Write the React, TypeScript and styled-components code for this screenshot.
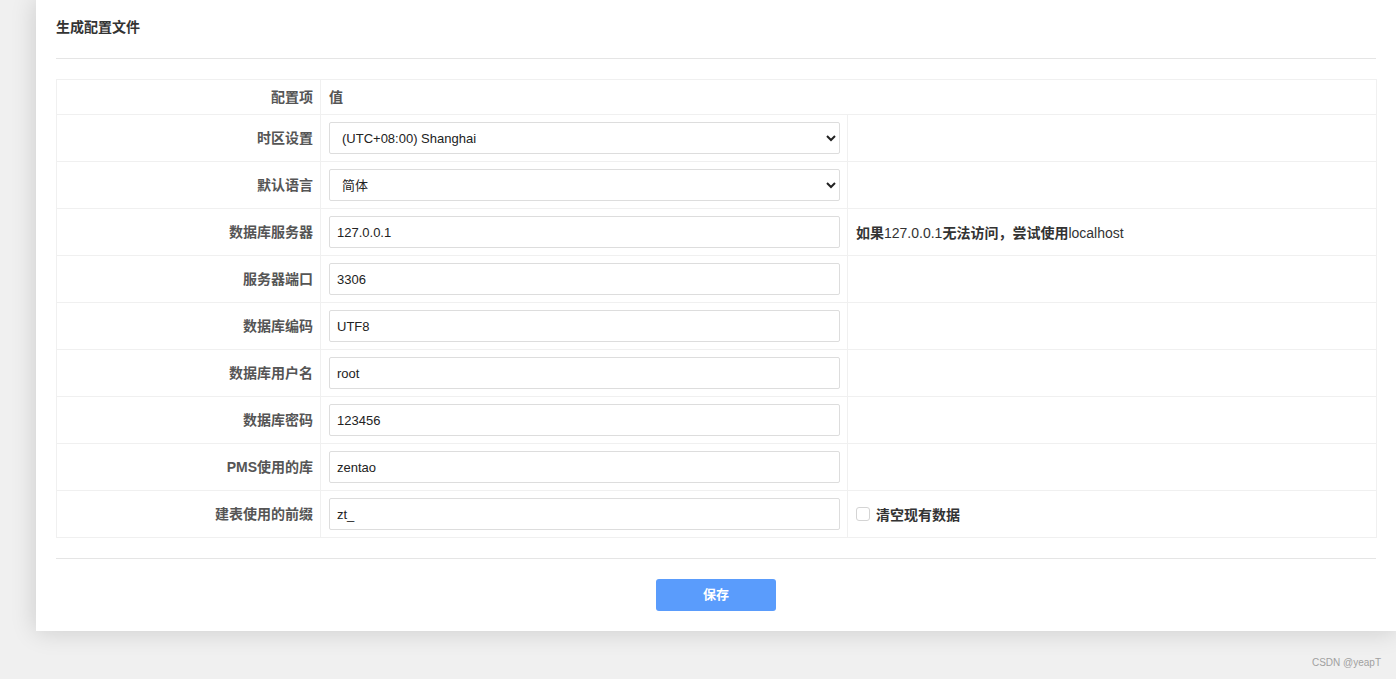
import { FC } from 'react';
import styled, { createGlobalStyle } from 'styled-components';

const GlobalStyle = createGlobalStyle`
  html, body {
    margin: 0;
    padding: 0;
    background: #f0f0f0;
    font-family: 'Liberation Sans', 'Noto Sans CJK SC', sans-serif;
    font-size: 13px;
    color: #333;
  }
`;

const Page = styled.div`
  width: 1396px;
  height: 679px;
  overflow: hidden;
`;

const Panel = styled.div`
  margin-left: 36px;
  width: 1360px;
  height: 631px;
  box-sizing: border-box;
  padding: 0 20px;
  background: #fff;
  box-shadow: 0 0 24px rgba(0, 0, 0, 0.16);
`;

const PanelHead = styled.div`
  height: 59px;
  box-sizing: border-box;
  padding-top: 17px;
  border-bottom: 1px solid #e5e5e5;
`;

const Title = styled.div`
  font-size: 14px;
  line-height: 20px;
  font-weight: bold;
  color: #333;
`;

const Table = styled.table`
  margin-top: 20px;
  width: 1320px;
  border-collapse: collapse;
  table-layout: fixed;
  border: 1px solid #f0f0f0;
`;

const Col = styled.col<{ $w: number }>`
  width: ${(p) => p.$w}px;
`;

const Row = styled.tr<{ $head?: boolean }>`
  height: ${(p) => (p.$head ? 35 : 47)}px;
  border-bottom: 1px solid #f0f0f0;
`;

const Label = styled.th`
  box-sizing: border-box;
  padding: 0 7px 2px 8px;
  text-align: right;
  font-size: 14px;
  font-weight: bold;
  color: #555;
  border-right: 1px solid #f0f0f0;
  vertical-align: middle;
`;

const ValueHead = styled.th`
  padding: 0 8px 2px;
  text-align: left;
  font-size: 14px;
  font-weight: bold;
  color: #555;
`;

const Cell = styled.td`
  box-sizing: border-box;
  padding: 0 8px;
  border-right: 1px solid #f0f0f0;
  vertical-align: middle;
`;

const Input = styled.input`
  display: block;
  width: 511px;
  height: 32px;
  box-sizing: border-box;
  padding: 0 7px;
  border: 1px solid #ddd;
  border-radius: 2px;
  font-family: 'Liberation Sans', 'Noto Sans CJK SC', sans-serif;
  font-size: 13px;
  color: #222;
  background: #fff;
  outline: none;
`;

const Select = styled.select`
  display: block;
  width: 511px;
  height: 32px;
  box-sizing: border-box;
  padding: 0 8px;
  border: 1px solid #ddd;
  border-radius: 2px;
  font-family: 'Liberation Sans', 'Noto Sans CJK SC', sans-serif;
  font-size: 13px;
  color: #222;
  background: #fff;
  outline: none;
`;

const Hint = styled.span`
  color: #333;
  font-size: 14px;
  b {
    font-weight: bold;
  }
`;

const CheckLabel = styled.label`
  display: flex;
  align-items: center;
  gap: 6px;
  font-size: 14px;
  font-weight: bold;
  color: #333;
`;

const CheckBox = styled.span`
  display: inline-block;
  width: 12px;
  height: 12px;
  border: 1px solid #d4d4d4;
  border-radius: 3px;
  background: #fff;
`;

const Footer = styled.div`
  margin-top: 20px;
  border-top: 1px solid #e5e5e5;
  padding-top: 20px;
  display: flex;
  justify-content: center;
`;

const SaveButton = styled.button`
  width: 120px;
  height: 32px;
  padding: 0 0 3px;
  border: none;
  border-radius: 3px;
  background: #5a9cfc;
  color: #fff;
  font-family: 'Liberation Sans', 'Noto Sans CJK SC', sans-serif;
  font-size: 13px;
  font-weight: bold;
`;

const Watermark = styled.div`
  padding: 26px 15px 0 0;
  text-align: right;
  font-size: 10px;
  color: #a0a0a0;
`;

type Field = { label: string; value: string };

const fields: Field[] = [
  { label: '服务器端口', value: '3306' },
  { label: '数据库编码', value: 'UTF8' },
  { label: '数据库用户名', value: 'root' },
  { label: '数据库密码', value: '123456' },
  { label: 'PMS使用的库', value: 'zentao' },
];

const App: FC = () => {
  return (
    <>
      <GlobalStyle />
      <Page>
        <Panel>
          <PanelHead>
            <Title>生成配置文件</Title>
          </PanelHead>
          <Table>
            <colgroup>
              <Col $w={264} />
              <Col $w={527} />
              <Col $w={529} />
            </colgroup>
            <tbody>
              <Row $head>
                <Label>配置项</Label>
                <ValueHead colSpan={2}>值</ValueHead>
              </Row>
              <Row>
                <Label>时区设置</Label>
                <Cell>
                  <Select defaultValue="sh">
                    <option value="sh">(UTC+08:00) Shanghai</option>
                  </Select>
                </Cell>
                <Cell></Cell>
              </Row>
              <Row>
                <Label>默认语言</Label>
                <Cell>
                  <Select defaultValue="zh">
                    <option value="zh">简体</option>
                  </Select>
                </Cell>
                <Cell></Cell>
              </Row>
              <Row>
                <Label>数据库服务器</Label>
                <Cell>
                  <Input defaultValue="127.0.0.1" />
                </Cell>
                <Cell>
                  <Hint>
                    <b>如果</b>127.0.0.1<b>无法访问，尝试使用</b>localhost
                  </Hint>
                </Cell>
              </Row>
              {fields.map((f) => (
                <Row key={f.label}>
                  <Label>{f.label}</Label>
                  <Cell>
                    <Input defaultValue={f.value} />
                  </Cell>
                  <Cell></Cell>
                </Row>
              ))}
              <Row>
                <Label>建表使用的前缀</Label>
                <Cell>
                  <Input defaultValue="zt_" />
                </Cell>
                <Cell>
                  <CheckLabel>
                    <CheckBox />
                    清空现有数据
                  </CheckLabel>
                </Cell>
              </Row>
            </tbody>
          </Table>
          <Footer>
            <SaveButton>保存</SaveButton>
          </Footer>
        </Panel>
        <Watermark>CSDN @yeapT</Watermark>
      </Page>
    </>
  );
};

export default App;
